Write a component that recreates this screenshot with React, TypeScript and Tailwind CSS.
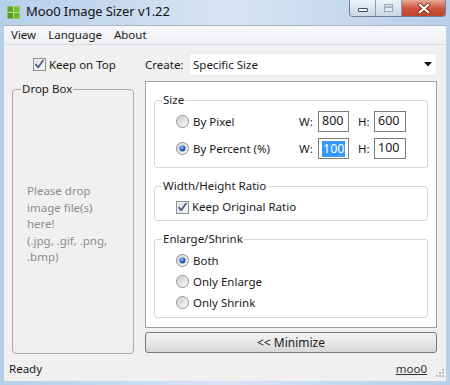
import React from "react";

const FONT = { fontFamily: '"Noto Sans", "Open Sans", sans-serif' };

function Radio({ checked }: { checked?: boolean }) {
  return (
    <svg width="13" height="13" viewBox="0 0 13 13" className="shrink-0">
      <defs>
        <linearGradient id="rg1" x1="0" y1="0" x2="1" y2="1">
          <stop offset="0" stopColor="#d0d0d0" />
          <stop offset="1" stopColor="#ffffff" />
        </linearGradient>
        <linearGradient id="rg2" x1="0" y1="0" x2="1" y2="1">
          <stop offset="0" stopColor="#cfcfcf" />
          <stop offset="1" stopColor="#f4f4f4" />
        </linearGradient>
        <radialGradient id="rg3" cx="0.4" cy="0.35" r="0.7">
          <stop offset="0" stopColor="#9cc6f5" />
          <stop offset="0.5" stopColor="#2f6fcb" />
          <stop offset="1" stopColor="#163f86" />
        </radialGradient>
      </defs>
      <circle cx="6.5" cy="6.5" r="6" fill="url(#rg1)" stroke="#8e8f8f" strokeWidth="1" />
      <circle cx="6.5" cy="6.5" r="4" fill="url(#rg2)" />
      {checked && <circle cx="6.5" cy="6.5" r="3" fill="url(#rg3)" />}
    </svg>
  );
}

function Check() {
  return (
    <svg width="13" height="13" viewBox="0 0 13 13" className="shrink-0">
      <defs>
        <linearGradient id="cg1" x1="0" y1="0" x2="1" y2="1">
          <stop offset="0" stopColor="#dedede" />
          <stop offset="1" stopColor="#fbfbfb" />
        </linearGradient>
      </defs>
      <rect x="0.5" y="0.5" width="12" height="12" fill="#f4f4f4" stroke="#8e8f8f" />
      <rect x="2" y="2" width="9" height="9" fill="url(#cg1)" stroke="#e2e2e2" strokeWidth="0.5" />
      <path d="M3 6.6 L5.3 9.3 L10 2.6" fill="none" stroke="#4c5f8c" strokeWidth="1.8" strokeLinejoin="round" strokeLinecap="round" />
    </svg>
  );
}

function Num({ value, selected, w }: { value: string; selected?: boolean; w: string }) {
  return (
    <div className={`${w} h-[21px] border border-[#7b7b7b] bg-white flex items-center pl-[3px] text-[12.5px] text-[#1a1a1a]`}>
      {selected ? <span className="bg-[#3399ff] text-white leading-[16px] px-[1px]">{value}</span> : <span>{value}</span>}
    </div>
  );
}

function Group({ label, className, children }: { label: string; className: string; children?: React.ReactNode }) {
  return (
    <fieldset className={`border border-[#d5d9dc] rounded-[3px] ${className}`}>
      <legend className="ml-[7px] px-[1px] leading-[16px] text-[#1a1a1a]">{label}</legend>
      {children}
    </fieldset>
  );
}

export default function App() {
  return (
    <div
      className="w-[450px] h-[385px] overflow-hidden bg-gradient-to-r from-[#b6cfe9] via-[#d6e5f4] to-[#b7cfe8] flex flex-col text-[11.5px] text-[#1a1a1a]"
      style={FONT}
    >
      {/* Title bar */}
      <div className="h-[25px] flex items-start shrink-0">
        <div className="flex items-center h-[24px] pl-[7px]">
          <svg width="13" height="13" viewBox="0 0 13 13">
            <rect x="0" y="0" width="13" height="13" fill="#b8df7a" />
            <rect x="0.5" y="0.5" width="5.5" height="5.5" fill="#5fa532" />
            <rect x="7" y="0.5" width="5.5" height="5.5" fill="#79bd3e" />
            <rect x="0.5" y="7" width="5.5" height="5.5" fill="#4f9a2a" />
            <rect x="7" y="7" width="5.5" height="5.5" fill="#6cb236" />
          </svg>
          <span className="ml-[6px] text-[13px] text-[#111] tracking-[-0.1px]">Moo0 Image Sizer v1.22</span>
        </div>
        <div className="ml-auto mr-[4px] flex h-[17px] rounded-b-[4px] border border-t-0 border-[#6f7f95] overflow-hidden">
          <div className="w-[26px] h-full bg-gradient-to-b from-[#eef3f8] to-[#c9d7e6] border-r border-[#8a9ab0] flex items-center justify-center">
            <div className="w-[10px] h-[4px] mt-[4px] bg-white border border-[#3c4a5e] rounded-[1px]" />
          </div>
          <div className="w-[26px] h-full bg-gradient-to-b from-[#eef3f8] to-[#c9d7e6] border-r border-[#8a9ab0] flex items-center justify-center">
            <div className="w-[9px] h-[8px] border border-[#9aa7b8] bg-[#e4ebf3] flex items-start justify-center">
              <div className="w-[7px] h-[2px] bg-[#aab6c6] mt-[1px]" />
            </div>
          </div>
          <div className="w-[43px] h-full bg-gradient-to-b from-[#e9a99a] via-[#cf5540] to-[#c0452d] flex items-center justify-center">
            <svg width="14" height="11" viewBox="0 0 14 11">
              <path d="M2.5 1.5 L11.5 9.5 M11.5 1.5 L2.5 9.5" stroke="#5a2418" strokeWidth="3.6" strokeLinecap="round" />
              <path d="M2.5 1.5 L11.5 9.5 M11.5 1.5 L2.5 9.5" stroke="#ffffff" strokeWidth="2" strokeLinecap="round" />
            </svg>
          </div>
        </div>
      </div>

      {/* Client */}
      <div className="mx-[4px] h-[356px] bg-[#f0f0f0] flex flex-col shrink-0 border-t border-[#a6b5c6]">
        {/* Menu */}
        <div className="h-[19px] bg-gradient-to-b from-[#f7f8fa] to-[#eef0f3] border-b border-[#dadde2] flex items-center text-[11.5px] shrink-0">
          <span className="ml-[7px]">View</span>
          <span className="ml-[12px]">Language</span>
          <span className="ml-[12px]">About</span>
        </div>

        {/* Content */}
        <div className="h-[312px] flex pt-[8px] pl-[8px] shrink-0">
          {/* Left column */}
          <div className="w-[122px] flex flex-col">
            <div className="h-[23px] flex items-center pl-[21px] gap-[3px]">
              <Check />
              <span>Keep on Top</span>
            </div>
            <fieldset className="mt-[5px] h-[273px] border border-[#a9a9a9] rounded-[4px]">
              <legend className="ml-[8px] px-[1px] leading-[16px]">Drop Box</legend>
              <div className="pl-[14px] pt-[86px] text-[#8c8c8c] leading-[16.6px]">
                Please drop
                <br />
                image file(s)
                <br />
                here!
                <br />
                (.jpg, .gif, .png,
                <br />
                .bmp)
              </div>
            </fieldset>
          </div>

          {/* Right column */}
          <div className="w-[292px] ml-[11px] flex flex-col">
            <div className="h-[23px] flex items-center">
              <span className="w-[44px]">Create:</span>
              <div className="flex-1 h-[23px] bg-white border border-[#eaeaea] flex items-center pl-[3px] pr-[3px]">
                <span>Specific Size</span>
                <svg className="ml-auto mr-[1px]" width="8" height="5" viewBox="0 0 8 5">
                  <path d="M0 0 H8 L4 4.5 Z" fill="#111" />
                </svg>
              </div>
            </div>

            <div className="mt-[5px] h-[247px] bg-white border border-[#a0a0a0] px-[8px] pt-[10px] flex flex-col">
              <Group label="Size" className="h-[76px]">
                <div className="mt-[3px] flex flex-col gap-[6px]">
                  <div className="h-[21px] flex items-center">
                    <div className="w-[144px] pl-[21px] flex items-center gap-[4px]">
                      <Radio />
                      <span>By Pixel</span>
                    </div>
                    <span className="w-[19px]">W:</span>
                    <Num value="800" w="w-[31px]" />
                    <span className="ml-[9px] w-[16px]">H:</span>
                    <Num value="600" w="w-[32px]" />
                  </div>
                  <div className="h-[21px] flex items-center">
                    <div className="w-[144px] pl-[21px] flex items-center gap-[4px]">
                      <Radio checked />
                      <span>By Percent (%)</span>
                    </div>
                    <span className="w-[19px]">W:</span>
                    <Num value="100" selected w="w-[31px]" />
                    <span className="ml-[9px] w-[16px]">H:</span>
                    <Num value="100" w="w-[32px]" />
                  </div>
                </div>
              </Group>

              <Group label="Width/Height Ratio" className="mt-[10px] h-[43px]">
                <div className="mt-[5px] h-[16px] pl-[21px] flex items-center gap-[3px]">
                  <Check />
                  <span>Keep Original Ratio</span>
                </div>
              </Group>

              <Group label="Enlarge/Shrink" className="mt-[10px] h-[87px]">
                <div className="mt-[3px] flex flex-col">
                  {[
                    ["Both", true],
                    ["Only Enlarge", false],
                    ["Only Shrink", false],
                  ].map(([t, c]) => (
                    <div key={t as string} className="h-[21px] pl-[21px] flex items-center gap-[4px]">
                      <Radio checked={c as boolean} />
                      <span>{t as string}</span>
                    </div>
                  ))}
                </div>
              </Group>
            </div>

            <div className="mt-[4px] h-[21px] rounded-[3px] border border-[#7a7a7a] bg-gradient-to-b from-[#f4f4f4] via-[#e8e8e8] to-[#d8d8d8] flex items-center justify-center text-[12px]">
              &lt;&lt; Minimize
            </div>
          </div>
        </div>

        {/* Status bar */}
        <div className="flex-1 flex items-center pl-[5px] pr-[2px]">
          <span>Ready</span>
          <span className="ml-auto underline text-[#333] mr-[9px]">moo0</span>
          <svg width="8" height="10" viewBox="0 0 8 10" className="self-end mb-[3px]">
            <rect x="6" y="1" width="2" height="2" fill="#bcbcbc" />
            <rect x="3" y="4" width="2" height="2" fill="#bcbcbc" />
            <rect x="6" y="4" width="2" height="2" fill="#bcbcbc" />
            <rect x="0" y="7" width="2" height="2" fill="#bcbcbc" />
            <rect x="3" y="7" width="2" height="2" fill="#bcbcbc" />
            <rect x="6" y="7" width="2" height="2" fill="#bcbcbc" />
          </svg>
        </div>
      </div>
    </div>
  );
}
